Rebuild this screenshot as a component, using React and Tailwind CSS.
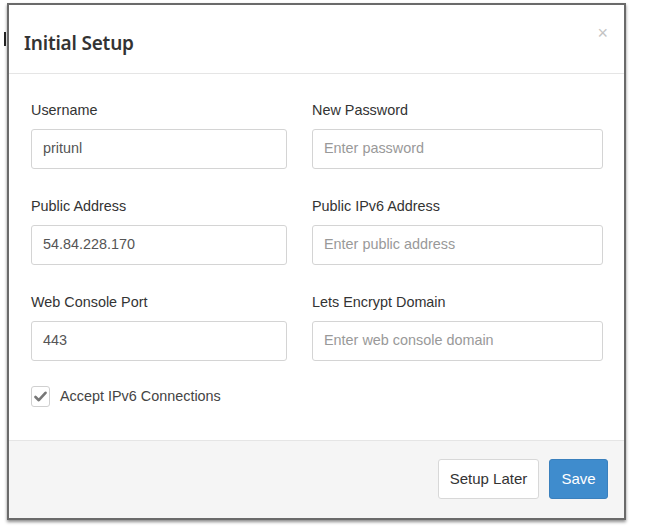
import React from "react";

function Field({ label, value, placeholder }) {
  return (
    <div className="flex flex-col">
      <div className="h-5 leading-5 text-[14.4px] text-[#333] mb-[9px]">{label}</div>
      <div className="h-10 border border-[#d4d4d4] rounded-[3px] flex items-center px-[11px] text-[14.4px] bg-white">
        {value ? (
          <span className="text-[#555]">{value}</span>
        ) : (
          <span className="text-[#999]">{placeholder}</span>
        )}
      </div>
    </div>
  );
}

export default function App() {
  return (
    <div
      className="w-[654px] h-[526px] bg-white relative overflow-hidden"
      style={{ fontFamily: '"Liberation Sans", Arial, sans-serif' }}
    >
      <div className="absolute left-[4px] top-[32px] w-[2px] h-[14px] bg-[#222]" />
      <div className="ml-[7px] mt-[3px] w-[619px] h-[517px] border-2 border-[#6a6a6a] bg-white flex flex-col shadow-[0_2px_3px_rgba(0,0,0,0.45)]">
        <div className="h-[69px] border-b border-[#e5e5e5] flex items-start justify-between pl-[15px] pr-[16px]">
          <div
            className="mt-[24px] text-[19px] leading-[28px] font-semibold text-[#333] tracking-[-0.2px]"
            style={{ fontFamily: '"Noto Sans", sans-serif' }}
          >
            Initial Setup
          </div>
          <div className="mt-[18px] text-[18px] leading-[20px] text-[#c4c4c4]">×</div>
        </div>
        <div className="flex-1 pl-[22px] pt-[26px]">
          <div className="grid grid-cols-[256px_291px] gap-x-[25px] gap-y-[27px]">
            <Field label="Username" value="pritunl" />
            <Field label="New Password" placeholder="Enter password" />
            <Field label="Public Address" value="54.84.228.170" />
            <Field label="Public IPv6 Address" placeholder="Enter public address" />
            <Field label="Web Console Port" value="443" />
            <Field label="Lets Encrypt Domain" placeholder="Enter web console domain" />
          </div>
          <div className="mt-[25px] flex items-center">
            <div className="w-[19px] h-[21px] border border-[#d0d0d0] rounded-[3px] flex items-center justify-center bg-white">
              <svg width="13" height="11" viewBox="0 0 13 11">
                <path d="M1.5 6 L4.8 9.2 L11.5 1.8" fill="none" stroke="#777" strokeWidth="2.6" strokeLinecap="round" strokeLinejoin="round" />
              </svg>
            </div>
            <span className="ml-[10px] text-[14.4px] text-[#444]">Accept IPv6 Connections</span>
          </div>
        </div>
        <div className="h-[78px] bg-[#f5f5f5] border-t border-[#e5e5e5] flex items-start justify-end pt-[18px] pr-[16px] gap-[10px]">
          <div className="w-[101px] h-10 bg-white border border-[#d8d8d8] rounded-[3px] flex items-center justify-center text-[15px] text-[#333]">
            Setup Later
          </div>
          <div className="w-[59px] h-10 bg-[#3f8ccd] border border-[#3a80bd] rounded-[3px] flex items-center justify-center text-[15px] text-white">
            Save
          </div>
        </div>
      </div>
    </div>
  );
}
